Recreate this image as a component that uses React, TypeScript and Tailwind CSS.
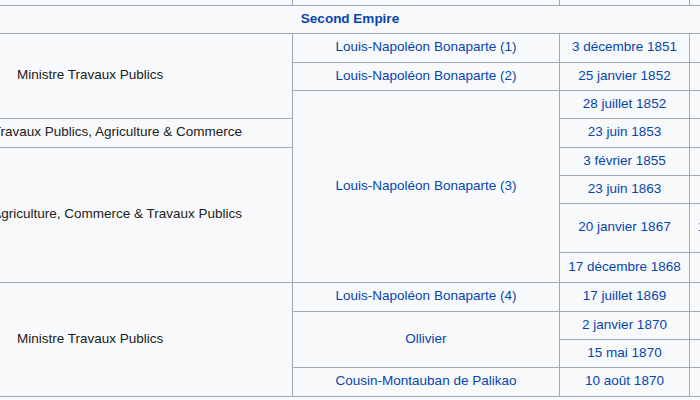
const link = "text-[#0645ad]";

type Cell = { text: string; cls: string };

// column 3 (dates) – one per data row
const dates = [
  "3 décembre 1851",
  "25 janvier 1852",
  "28 juillet 1852",
  "23 juin 1853",
  "3 février 1855",
  "23 juin 1863",
  "20 janvier 1867",
  "17 décembre 1868",
  "17 juillet 1869",
  "2 janvier 1870",
  "15 mai 1870",
  "10 août 1870",
];

const dateRows = [
  "row-start-3",
  "row-start-4",
  "row-start-5",
  "row-start-6",
  "row-start-7",
  "row-start-8",
  "row-start-9",
  "row-start-10",
  "row-start-11",
  "row-start-12",
  "row-start-13",
  "row-start-14",
];

const ministries: Cell[] = [
  { text: "Ministre Travaux Publics", cls: "row-start-3 row-span-3 justify-start pl-[17px]" },
  { text: "Travaux Publics, Agriculture & Commerce", cls: "row-start-6 justify-end pr-[50px]" },
  { text: "Agriculture, Commerce & Travaux Publics", cls: "row-start-7 row-span-4 justify-end pr-[50px]" },
  { text: "Ministre Travaux Publics", cls: "row-start-11 row-span-4 justify-start pl-[17px]" },
];

const governments: Cell[] = [
  { text: "Louis-Napoléon Bonaparte (1)", cls: "row-start-3" },
  { text: "Louis-Napoléon Bonaparte (2)", cls: "row-start-4" },
  { text: "Louis-Napoléon Bonaparte (3)", cls: "row-start-5 row-span-6" },
  { text: "Louis-Napoléon Bonaparte (4)", cls: "row-start-11" },
  { text: "Ollivier", cls: "row-start-12 row-span-2" },
  { text: "Cousin-Montauban de Palikao", cls: "row-start-14" },
];

export default function App() {
  return (
    <div
      className="w-[700px] h-[400px] overflow-hidden bg-[#f8f9fa] text-[13.5px] leading-none text-[#202122]"
      style={{ fontFamily: '"Liberation Sans", Arial, sans-serif' }}
    >
      <div className="grid grid-cols-[292px_266px_129px_1fr] grid-rows-[5px_27px_28px_27px_27px_28px_27px_27px_48px_29px_28px_27px_27px_28px] gap-px bg-[#a2a9b1] border-b border-[#a2a9b1]">
        {/* previous row, cut off at the top */}
        <div className="row-start-1 col-start-1 bg-[#f8f9fa]" />
        <div className="row-start-1 col-start-2 bg-[#f8f9fa]" />
        <div className="row-start-1 col-start-3 bg-[#f8f9fa]" />
        <div className="row-start-1 col-start-4 bg-[#f8f9fa]" />

        {/* section header */}
        <div className={`row-start-2 col-start-1 col-span-4 bg-[#f8f9fa] flex items-center justify-center pb-[2px] font-bold ${link}`}>
          Second Empire
        </div>

        {ministries.map((m, i) => (
          <div
            key={"m" + i}
            className={`col-start-1 bg-[#f8f9fa] flex items-center pb-[2px] whitespace-nowrap overflow-hidden ${m.cls}`}
          >
            {m.text}
          </div>
        ))}

        {governments.map((g, i) => (
          <div
            key={"g" + i}
            className={`col-start-2 bg-[#f8f9fa] flex items-center justify-center pb-[2px] whitespace-nowrap ${link} ${g.cls}`}
          >
            {g.text}
          </div>
        ))}

        {dates.map((d, i) => (
          <div
            key={"d" + i}
            className={`col-start-3 bg-[#f8f9fa] flex items-center justify-center pb-[2px] whitespace-nowrap ${link} ${dateRows[i]}`}
          >
            {d}
          </div>
        ))}

        {dates.map((_, i) => (
          <div
            key={"e" + i}
            className={`col-start-4 bg-[#f8f9fa] flex items-center pl-[8px] pb-[2px] whitespace-nowrap overflow-hidden ${link} ${dateRows[i]}`}
          >
            {i === 6 ? "1" : ""}
          </div>
        ))}
      </div>
    </div>
  );
}
